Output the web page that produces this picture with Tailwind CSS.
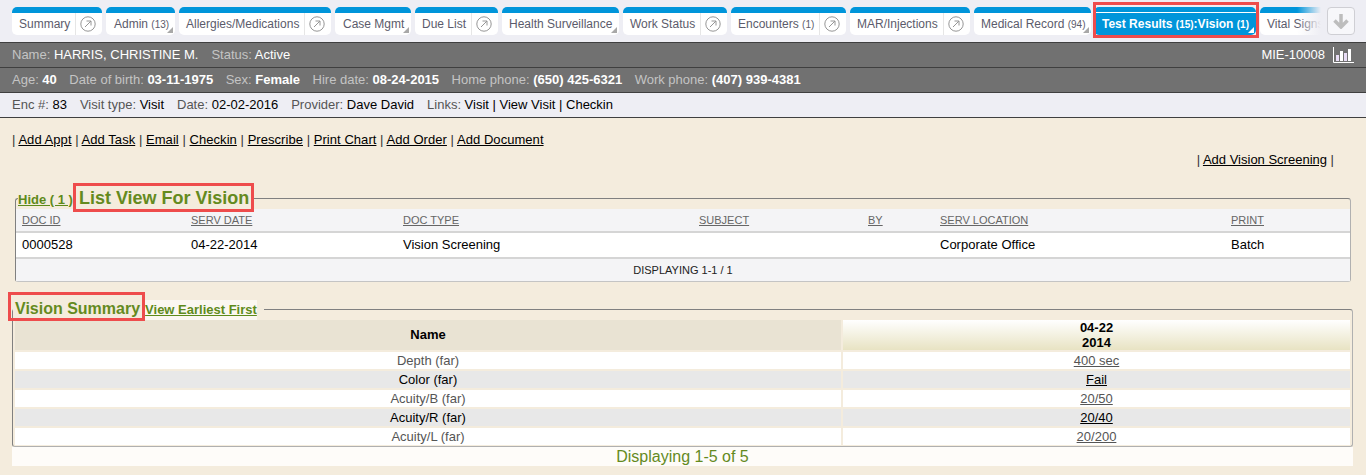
<!DOCTYPE html>
<html lang="en">
<head>
    <meta charset="UTF-8">
    <title>Test Results - Vision</title>
    <script src="https://cdn.jsdelivr.net/npm/@tailwindcss/browser@4"></script>
</head>
<body class="relative h-[475px] w-[1366px] overflow-hidden bg-[#f4ecdd] font-['Liberation_Sans',Arial,sans-serif] text-[13px] text-black">

    <!-- Tabs -->
    <div class="flex h-[42px] gap-[4px] bg-[#eeeef4] pl-[12px] pt-[7px] text-[12px] text-[#5b5b6b]">
        <div class="flex h-[28px] w-[90px] flex-col overflow-hidden rounded-[5px] bg-white">
            <div class="h-[6px] bg-[#0095da]"></div>
            <div class="flex flex-1 items-center">
                <span class="flex-1 pl-[7px]">Summary</span>
                <span class="flex h-full w-[27px] items-center justify-center border-l border-[#e6e6e6] pr-[2px]">
                    <svg width="16" height="16" viewBox="0 0 16 16" fill="none" stroke="#969696"><circle cx="8" cy="8" r="7.200"/><path d="M5 11l6-6M6.500 5H11v4.500"/></svg>
                </span>
            </div>
        </div>
        <div class="relative flex h-[28px] w-[69px] flex-col overflow-hidden rounded-[5px] bg-white">
            <div class="h-[6px] bg-[#0095da]"></div>
            <div class="flex flex-1 items-center pl-[8px]">Admin&nbsp;<span class="text-[10px]">(13)</span></div>
            <svg class="absolute bottom-[2px] right-[2px]" width="6" height="6"><path d="M6 0v6H0z" fill="#a8a8a8"/></svg>
        </div>
        <div class="flex h-[28px] w-[152px] flex-col overflow-hidden rounded-[5px] bg-white">
            <div class="h-[6px] bg-[#0095da]"></div>
            <div class="flex flex-1 items-center">
                <span class="flex-1 pl-[7px]">Allergies/Medications</span>
                <span class="flex h-full w-[27px] items-center justify-center border-l border-[#e6e6e6] pr-[2px]">
                    <svg width="16" height="16" viewBox="0 0 16 16" fill="none" stroke="#969696"><circle cx="8" cy="8" r="7.200"/><path d="M5 11l6-6M6.500 5H11v4.500"/></svg>
                </span>
            </div>
        </div>
        <div class="relative flex h-[28px] w-[76px] flex-col overflow-hidden rounded-[5px] bg-white">
            <div class="h-[6px] bg-[#0095da]"></div>
            <div class="flex flex-1 items-center pl-[8px]">Case Mgmt</div>
            <svg class="absolute bottom-[2px] right-[2px]" width="6" height="6"><path d="M6 0v6H0z" fill="#a8a8a8"/></svg>
        </div>
        <div class="flex h-[28px] w-[83px] flex-col overflow-hidden rounded-[5px] bg-white">
            <div class="h-[6px] bg-[#0095da]"></div>
            <div class="flex flex-1 items-center">
                <span class="flex-1 pl-[7px]">Due List</span>
                <span class="flex h-full w-[27px] items-center justify-center border-l border-[#e6e6e6] pr-[2px]">
                    <svg width="16" height="16" viewBox="0 0 16 16" fill="none" stroke="#969696"><circle cx="8" cy="8" r="7.200"/><path d="M5 11l6-6M6.500 5H11v4.500"/></svg>
                </span>
            </div>
        </div>
        <div class="relative flex h-[28px] w-[117px] flex-col overflow-hidden rounded-[5px] bg-white">
            <div class="h-[6px] bg-[#0095da]"></div>
            <div class="flex flex-1 items-center pl-[7px]">Health Surveillance</div>
            <svg class="absolute bottom-[2px] right-[2px]" width="6" height="6"><path d="M6 0v6H0z" fill="#a8a8a8"/></svg>
        </div>
        <div class="flex h-[28px] w-[104px] flex-col overflow-hidden rounded-[5px] bg-white">
            <div class="h-[6px] bg-[#0095da]"></div>
            <div class="flex flex-1 items-center">
                <span class="flex-1 pl-[7px]">Work Status</span>
                <span class="flex h-full w-[27px] items-center justify-center border-l border-[#e6e6e6] pr-[2px]">
                    <svg width="16" height="16" viewBox="0 0 16 16" fill="none" stroke="#969696"><circle cx="8" cy="8" r="7.200"/><path d="M5 11l6-6M6.500 5H11v4.500"/></svg>
                </span>
            </div>
        </div>
        <div class="flex h-[28px] w-[115px] flex-col overflow-hidden rounded-[5px] bg-white">
            <div class="h-[6px] bg-[#0095da]"></div>
            <div class="flex flex-1 items-center">
                <span class="flex-1 pl-[7px]">Encounters&nbsp;<span class="text-[10px]">(1)</span></span>
                <span class="flex h-full w-[27px] items-center justify-center border-l border-[#e6e6e6] pr-[2px]">
                    <svg width="16" height="16" viewBox="0 0 16 16" fill="none" stroke="#969696"><circle cx="8" cy="8" r="7.200"/><path d="M5 11l6-6M6.500 5H11v4.500"/></svg>
                </span>
            </div>
        </div>
        <div class="flex h-[28px] w-[120px] flex-col overflow-hidden rounded-[5px] bg-white">
            <div class="h-[6px] bg-[#0095da]"></div>
            <div class="flex flex-1 items-center">
                <span class="flex-1 pl-[7px]">MAR/Injections</span>
                <span class="flex h-full w-[27px] items-center justify-center border-l border-[#e6e6e6] pr-[2px]">
                    <svg width="16" height="16" viewBox="0 0 16 16" fill="none" stroke="#969696"><circle cx="8" cy="8" r="7.200"/><path d="M5 11l6-6M6.500 5H11v4.500"/></svg>
                </span>
            </div>
        </div>
        <div class="relative flex h-[28px] w-[117px] flex-col overflow-hidden rounded-[5px] bg-white">
            <div class="h-[6px] bg-[#0095da]"></div>
            <div class="flex flex-1 items-center pl-[7px]">Medical Record&nbsp;<span class="text-[10px]">(94)</span></div>
            <svg class="absolute bottom-[2px] right-[2px]" width="6" height="6"><path d="M6 0v6H0z" fill="#a8a8a8"/></svg>
        </div>
        <div class="relative -ml-[1px] flex h-[28px] w-[162px] flex-col overflow-hidden rounded-[5px] bg-[#0095da] font-bold text-white">
            <div class="h-[6px] border-b border-white"></div>
            <div class="flex flex-1 items-center pl-[8px]">Test Results&nbsp;<span class="text-[10px]">(15)</span>:Vision&nbsp;<span class="text-[10px]">(1)</span></div>
            <svg class="absolute bottom-[2px] right-[2px]" width="6" height="6"><path d="M6 0v6H0z" fill="#fff"/></svg>
        </div>
        <div class="relative flex h-[28px] w-[61px] flex-col overflow-hidden rounded-l-[5px] bg-white">
            <div class="h-[6px] bg-[#0095da]"></div>
            <div class="flex flex-1 items-center whitespace-nowrap pl-[7px]">Vital Signs</div>
            <div class="absolute inset-y-0 right-0 w-[24px] bg-gradient-to-r from-[#eeeef4]/0 to-[#eeeef4]"></div>
        </div>
        <div class="ml-[2px] flex h-[28px] w-[28px] items-center justify-center rounded-[4px] border border-[#cfcfd4] bg-[#f7f7fa]">
            <svg width="18" height="16" viewBox="0 0 18 16" fill="none" stroke="#bdbdbd" stroke-width="3.500"><path d="M9 1v12M2.500 7.500L9 14l6.500-6.500"/></svg>
        </div>
    </div>

    <!-- Patient banner -->
    <div class="flex h-[26px] items-center justify-between border-y border-[#3f3f3f] bg-[#717171] pl-[12px] pr-[12px] text-[#c4c4c4]">
        <div class="flex gap-[13px]">
            <span>Name: <span class="text-white">HARRIS, CHRISTINE M.</span></span>
            <span>Status: <span class="text-white">Active</span></span>
        </div>
        <div class="flex items-center gap-[8px] text-white">
            <span>MIE-10008</span>
            <svg width="21" height="16" viewBox="0 0 21 16" fill="none">
                <path d="M.5 0v15.500H21" stroke="#fff"/>
                <path d="M3 8h3v6H3zM11 6h3v8h-3z" fill="#e8dcf5"/>
                <path d="M7 4h3v10H7zM15 2h3v12h-3z" fill="#fff"/>
            </svg>
        </div>
    </div>
    <div class="flex h-[25px] items-center gap-[12.500px] border-b border-[#3f3f3f] bg-[#717171] pl-[12px] text-[#c4c4c4]">
        <span>Age: <span class="font-bold text-white">40</span></span>
        <span>Date of birth: <span class="font-bold text-white">03-11-1975</span></span>
        <span>Sex: <span class="font-bold text-white">Female</span></span>
        <span>Hire date: <span class="font-bold text-white">08-24-2015</span></span>
        <span>Home phone: <span class="font-bold text-white">(650) 425-6321</span></span>
        <span>Work phone: <span class="font-bold text-white">(407) 939-4381</span></span>
    </div>
    <div class="flex h-[25px] items-center gap-[13px] border-b border-[#3f3f3f] bg-[#eeeef4] pl-[12px] text-[#555]">
        <span>Enc #: <span class="text-black">83</span></span>
        <span>Visit type: <span class="text-black">Visit</span></span>
        <span>Date: <span class="text-black">02-02-2016</span></span>
        <span>Provider: <span class="text-black">Dave David</span></span>
        <span>Links: <span class="text-black">Visit | View Visit | Checkin</span></span>
    </div>

    <!-- Action links -->
    <div class="pl-[12px] pt-[14px] leading-[15px] tracking-[0.05px] text-[#333]">
        | <a class="text-black underline">Add Appt</a>
        | <a class="text-black underline">Add Task</a>
        | <a class="text-black underline">Email</a>
        | <a class="text-black underline">Checkin</a>
        | <a class="text-black underline">Prescribe</a>
        | <a class="text-black underline">Print Chart</a>
        | <a class="text-black underline">Add Order</a>
        | <a class="text-black underline">Add Document</a>
    </div>
    <div class="mt-[5px] pr-[32px] text-right leading-[15px] text-[#333]">
        | <a class="text-black underline">Add Vision Screening</a> |
    </div>

    <!-- List view -->
    <fieldset class="ml-[15px] mt-[18px] w-[1336px] rounded-[3px] border border-[#808080] border-b-[#c4c4c4] border-r-[#b0b0b0] bg-transparent">
        <legend class="ml-[2px] flex h-[26px] items-center pr-[3px]">
            <a class="mt-[3px] font-bold text-[#5e8a1a] underline">Hide ( 1 )</a>
            <span class="ml-[6px] text-[18px] font-bold text-[#648a1e]">List View For Vision</span>
        </legend>
        <table class="-mt-[2px] w-full table-fixed border-collapse text-[13px]">
            <colgroup><col class="w-[175px]"><col class="w-[212px]"><col class="w-[296px]"><col class="w-[169px]"><col class="w-[72px]"><col class="w-[291px]"><col></colgroup>
            <tr class="h-[23px] border-b-2 border-[#d5d5d5] bg-[#f4f4f6] text-left text-[11px] text-[#666]">
                <th class="pl-[6px] font-normal underline">DOC ID</th>
                <th class="font-normal underline">SERV DATE</th>
                <th class="font-normal underline">DOC TYPE</th>
                <th class="font-normal underline">SUBJECT</th>
                <th class="font-normal underline">BY</th>
                <th class="font-normal underline">SERV LOCATION</th>
                <th class="font-normal underline">PRINT</th>
            </tr>
            <tr class="h-[26px] border-b-2 border-[#d5d5d5] bg-white">
                <td class="pl-[6px]">0000528</td>
                <td>04-22-2014</td>
                <td>Vision Screening</td>
                <td></td>
                <td></td>
                <td>Corporate Office</td>
                <td>Batch</td>
            </tr>
            <tr class="h-[23px] bg-[#f4f4f6]">
                <td colspan="7" class="text-center text-[11px] text-[#222]">DISPLAYING 1-1 / 1</td>
            </tr>
        </table>
    </fieldset>

    <!-- Vision summary -->
    <fieldset class="ml-[12px] mt-[15px] w-[1341px] rounded-[3px] border border-[#808080] border-b-[#b0b0b0] border-r-[#b0b0b0]">
        <legend class="flex h-[24px] items-center pr-[7px]">
            <span class="pl-[2px] text-[16px] font-bold text-[#648a1e]">Vision Summary</span>
            <a class="ml-[5px] mt-[2px] bg-white/60 font-bold text-[#5e8a1a] underline">View Earliest First</a>
        </legend>
        <table class="-mb-[1px] -mt-[3px] w-full table-fixed border-separate border-spacing-[2px] text-center text-[13px] leading-[17px] text-[#555]">
            <colgroup><col class="w-[826px]"><col></colgroup>
            <tr class="h-[30px] text-black">
                <th class="bg-[#e9e3d3] pb-[2px]">Name</th>
                <th class="bg-gradient-to-b from-white to-[#e8e3c3] leading-[15px]">04-22<br>2014</th>
            </tr>
            <tr class="h-[17px] bg-white"><td class="p-0">Depth (far)</td><td class="p-0 underline">400 sec</td></tr>
            <tr class="h-[17px] bg-[#e8e8e8] text-black"><td class="p-0">Color (far)</td><td class="p-0 underline">Fail</td></tr>
            <tr class="h-[17px] bg-white"><td class="p-0">Acuity/B (far)</td><td class="p-0 underline">20/50</td></tr>
            <tr class="h-[17px] bg-[#e8e8e8] text-black"><td class="p-0">Acuity/R (far)</td><td class="p-0 underline">20/40</td></tr>
            <tr class="h-[17px] bg-white"><td class="p-0">Acuity/L (far)</td><td class="p-0 underline">20/200</td></tr>
        </table>
    </fieldset>
    <div class="ml-[12px] flex h-[19px] w-[1341px] items-center justify-center bg-[#fefcf9] text-[16px] text-[#648a1e]">Displaying 1-5 of 5</div>

    <!-- Annotation boxes -->
    <div class="absolute left-[1093px] top-[2px] h-[36px] w-[166px] border-[3px] border-[#ee4c4c]"></div>
    <div class="absolute left-[73px] top-[183px] h-[29px] w-[181px] border-[3px] border-[#ee4c4c]"></div>
    <div class="absolute left-[8px] top-[292px] h-[29px] w-[137px] border-[3px] border-[#ee4c4c]"></div>
</body>
</html>
